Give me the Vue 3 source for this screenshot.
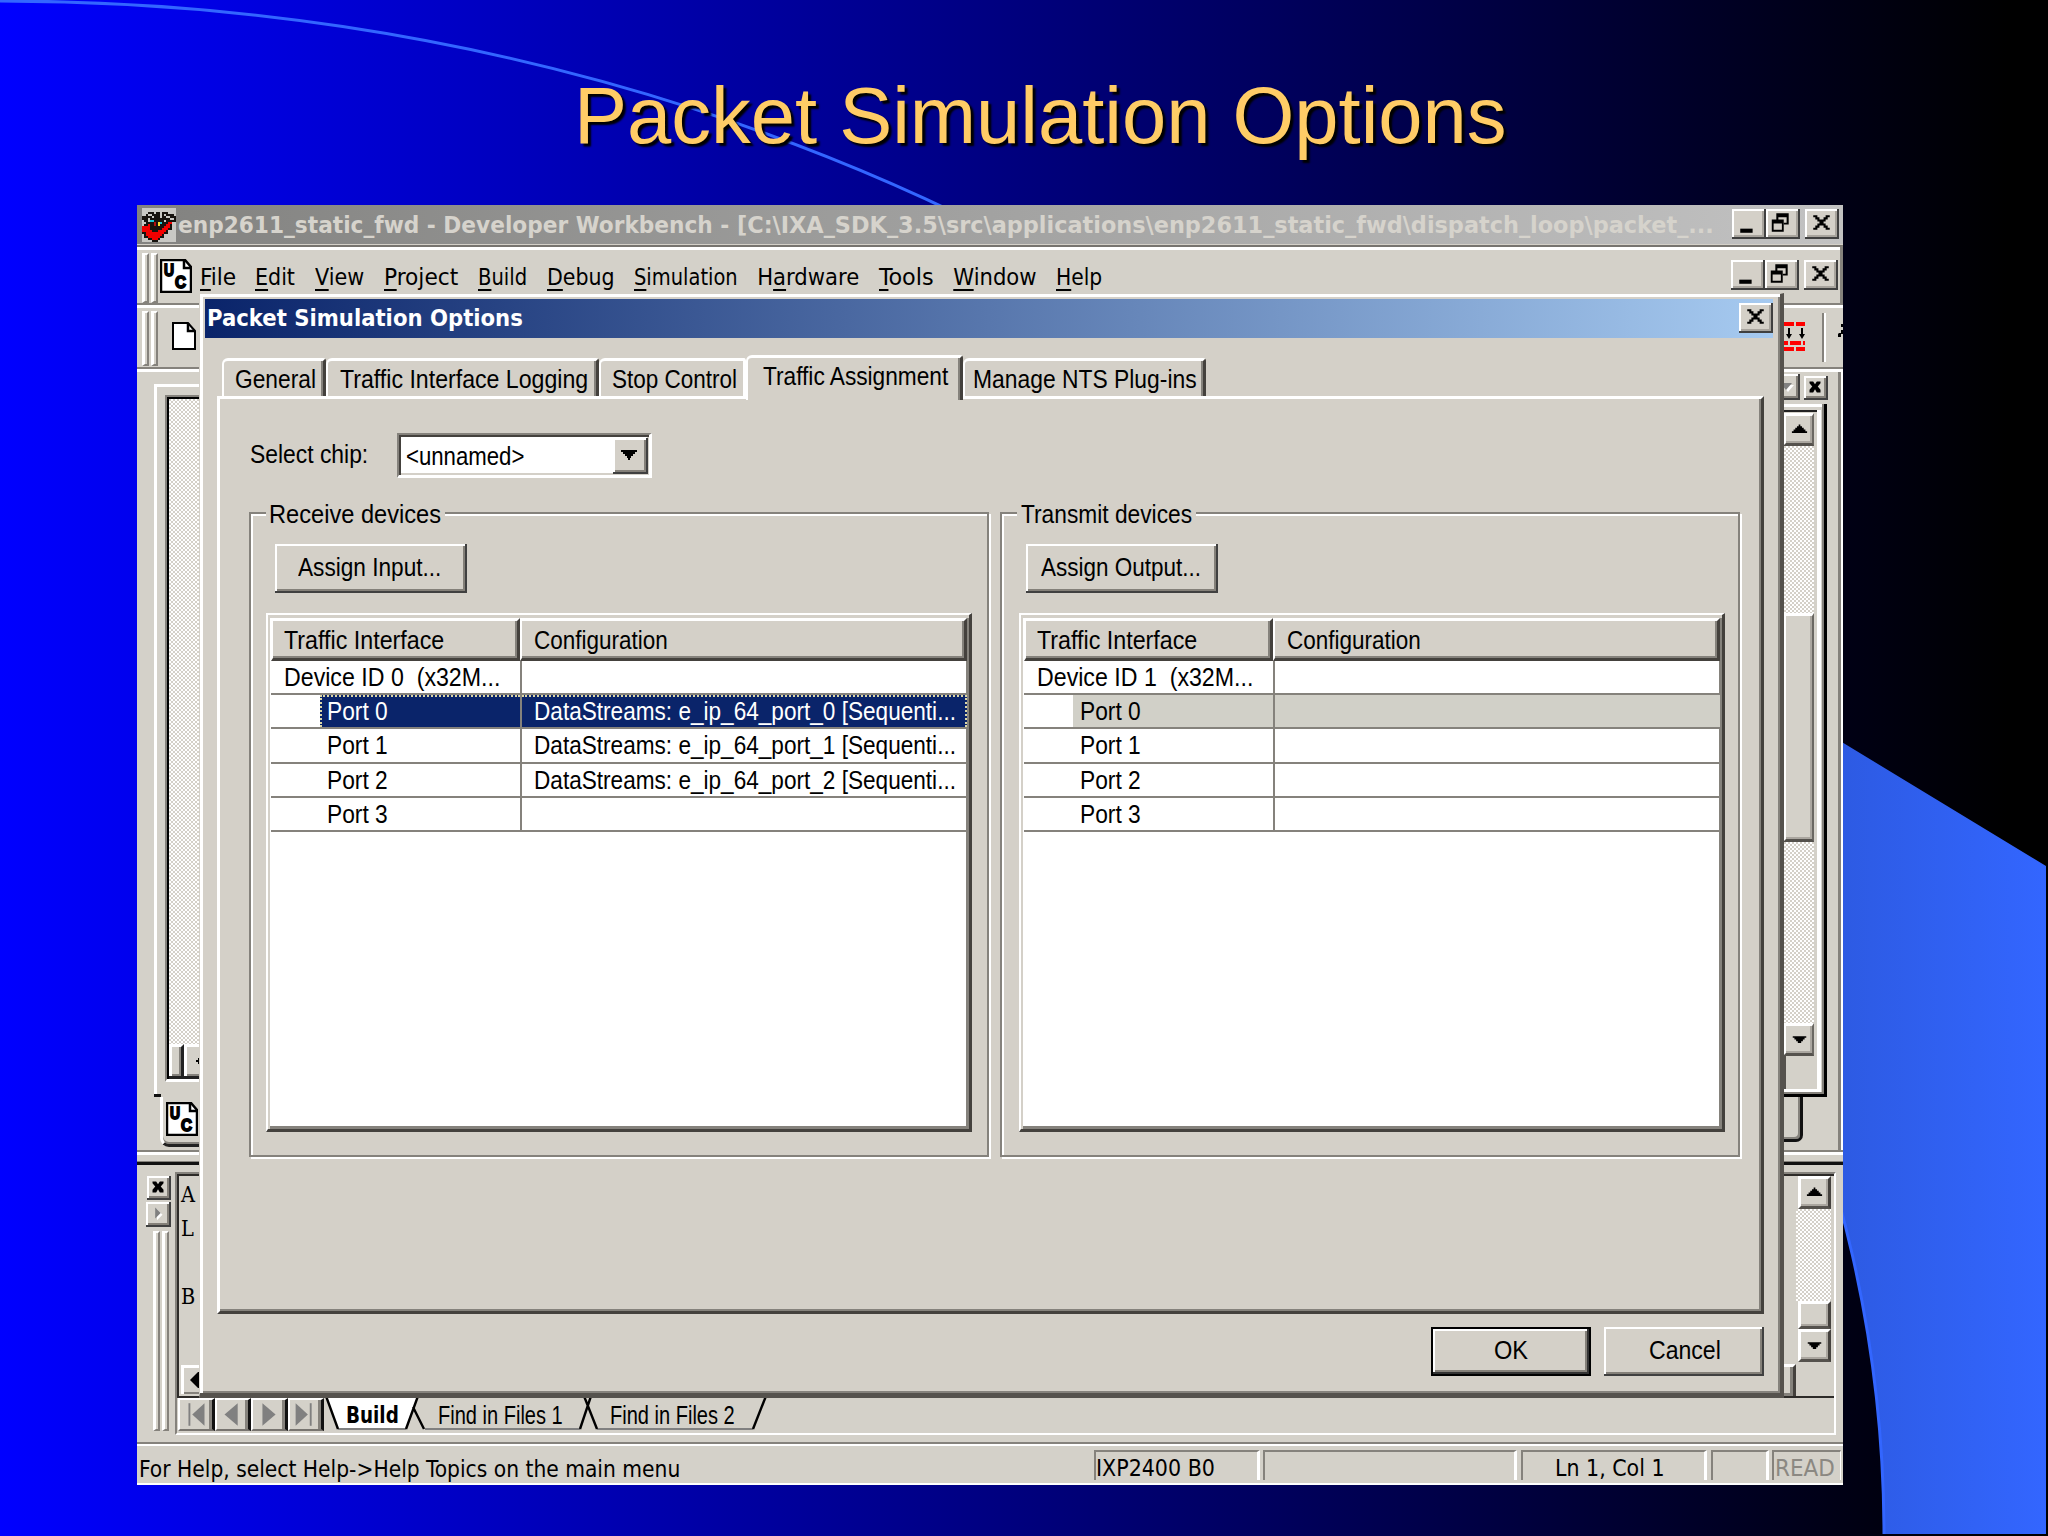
<script setup>
// Condenses a run of text horizontally so that it occupies the given width.
const vFit = {
  mounted(el, { value }) {
    const natural = el.offsetWidth
    el.style.transform = `scaleX(${value / natural})`
    el.style.marginRight = `${value - natural}px`
  }
}

const closeGlyph = 'M4 3h2v1h1v1h2v-1h1v-1h2v1h-1v1h-1v1h-1v1h1v1h1v1h1v1h-2v-1h-1v-1h-2v1h-1v1h-2v-1h1v-1h1v-1h1v-1h-1v-1h-1v-1h-1z'
const restoreGlyph = 'M5 2h6v5.500H8.500V6.600H10V4H6v1H5zM2.800 5h5.800v6H2.800zM3.700 7v3h4V7z'

const menus = [
  { a: '', k: 'F', b: 'ile', w: 36 },
  { a: '', k: 'E', b: 'dit', w: 40 },
  { a: '', k: 'V', b: 'iew', w: 49 },
  { a: '', k: 'P', b: 'roject', w: 74 },
  { a: '', k: 'B', b: 'uild', w: 49 },
  { a: '', k: 'D', b: 'ebug', w: 68 },
  { a: '', k: 'S', b: 'imulation', w: 104 },
  { a: 'H', k: 'a', b: 'rdware', w: 102 },
  { a: '', k: 'T', b: 'ools', w: 55 },
  { a: '', k: 'W', b: 'indow', w: 83 },
  { a: '', k: 'H', b: 'elp', w: 46 }
]

const tabs = [
  { t: 'General', w: 104, tw: 81, pad: 11 },
  { t: 'Traffic Interface Logging', w: 273, tw: 248, pad: 12 },
  { t: 'Stop Control', w: 147, tw: 125, pad: 11 },
  { t: 'Traffic Assignment', w: 217, tw: 185, pad: 15, on: true },
  { t: 'Manage NTS Plug-ins', w: 243, tw: 224, pad: 8 }
]

const groups = [
  {
    name: 'Receive devices', lw: 172, btn: 'Assign Input...', bw: 143, dev: 'Device ID 0  (x32M...', focus: true, lead: 15,
    ports: ['DataStreams: e_ip_64_port_0 [Sequenti...', 'DataStreams: e_ip_64_port_1 [Sequenti...', 'DataStreams: e_ip_64_port_2 [Sequenti...', '']
  },
  {
    name: 'Transmit devices', lw: 171, btn: 'Assign Output...', bw: 160, dev: 'Device ID 1  (x32M...', focus: false, lead: 17,
    ports: ['', '', '', '']
  }
]

const nav = [
  { bar: 9, tri: '26,3 26,27 13,15' },
  { bar: null, tri: '22,3 22,27 8,15' },
  { bar: null, tri: '10,3 10,27 24,15' },
  { bar: 21, tri: '6,3 6,27 19,15' }
]
</script>

<template>
  <div class="slide">
    <svg class="backdrop" width="2048" height="1536" viewBox="0 0 2048 1536">
      <defs>
        <linearGradient id="swoosh" x1="1500" x2="2046" y1="0" y2="0" gradientUnits="userSpaceOnUse">
          <stop offset="0" stop-color="#2347b4" />
          <stop offset="1" stop-color="#3366ff" />
        </linearGradient>
      </defs>
      <path d="M1700 656 L2046 866 V1534 H1884 A1884 1534 0 0 0 1700 873 Z" fill="url(#swoosh)" />
      <path d="M0 1 A1884 1534 0 0 1 1884 1534" fill="none" stroke="#3366ff" stroke-width="3" />
    </svg>
    <h1><span v-fit="933">Packet Simulation Options</span></h1>

    <div class="app">
      <header class="caption">
        <svg class="logo" width="35" height="34" viewBox="0 0 17 17" shape-rendering="crispEdges">
          <rect width="17" height="17" fill="#c8c8c4" />
          <path d="M1 3h2V2h3v1h1V2h2v1h1V2h3v1h3v1h1v3h-1v2h-1v2h-2v2h-2v2H9v1H8v1H5v-1H3v-1H1v-2H0V9h1V6H0V4h1z" fill="#16130f" />
          <path d="M0 9h3V8h1v3h1v1h3v-1h2v-1h1V9h1V8h1V7h2v1h-1v2h-1v1h-1v1h-1v1h-1v1H9v1H8v1H5v-1H3v-1H2v-2H0z" fill="#f20000" />
          <path d="M1 3h1v1H1zM3 3h2v1H3zM3 5h1v2H3zM5 4h1v1H5zM9 3h1v2H9zM11 3h1v1h-1zM12 4h2v1h-2zM14 5h2v1h-2zM11 6h1v1h-1zM1 7h1v1H1zM15 7h2v2h-2z" fill="#c8c8c4" />
          <path d="M4 6h2v1H4zM9 7h1v1H9z" fill="#18c8d8" /><path d="M8 7h1v2H8z" fill="#f4dc30" /><path d="M6 7h1v2H6z" fill="#b01010" />
        </svg>
        <span class="caption-text ui" v-fit="559">enp2611_static_fwd - Developer Workbench - </span>
        <span class="caption-text ui" v-fit="977">[C:\IXA_SDK_3.5\src\applications\enp2611_static_fwd\dispatch_loop\packet_...</span>
        <div class="winbtns">
          <i class="wb"><svg viewBox="0 0 16 14"><path d="M4 9.500h6v2H4z" /></svg></i>
          <i class="wb"><svg viewBox="0 0 16 14"><path :d="restoreGlyph" fill-rule="evenodd" /></svg></i>
          <i class="wb last"><svg viewBox="0 0 16 14"><path :d="closeGlyph" /></svg></i>
        </div>
      </header>

      <nav class="menubar">
        <i class="grip"></i><i class="grip"></i>
        <svg class="uc" width="32" height="34" viewBox="0 0 32 34">
          <path d="M1 1h24l6 7v25H1z" fill="#fff" stroke="#000" stroke-width="2.500" /><path d="M24 1v8h7" fill="none" stroke="#000" stroke-width="2.500" />
          <text x="4" y="17" class="uctext" textLength="10" lengthAdjust="spacingAndGlyphs">U</text><text x="15" y="29" class="uctext" textLength="11" lengthAdjust="spacingAndGlyphs">C</text>
        </svg>
        <div class="menus">
          <span v-for="m in menus" :key="m.k + m.b" class="ui" v-fit="m.w">{{ m.a }}<u>{{ m.k }}</u>{{ m.b }}</span>
        </div>
        <div class="winbtns mdi">
          <i class="wb"><svg viewBox="0 0 16 14"><path d="M4 9.500h6v2H4z" /></svg></i>
          <i class="wb"><svg viewBox="0 0 16 14"><path :d="restoreGlyph" fill-rule="evenodd" /></svg></i>
          <i class="wb last"><svg viewBox="0 0 16 14"><path :d="closeGlyph" /></svg></i>
        </div>
      </nav>

      <div class="toolbar">
        <i class="grip"></i><i class="grip"></i>
        <svg class="new" width="24" height="28" viewBox="0 0 24 28"><path d="M1 1h15l7 8v18H1z" fill="#fff" stroke="#000" stroke-width="2" /><path d="M16 1v8h7" fill="none" stroke="#000" stroke-width="2.500" /></svg>
        <svg class="bricks" width="22" height="32" viewBox="0 0 22 32">
          <path d="M0 1h11v4H0zM13 1h9v4h-9zM0 20h5v4H0zM7 20h11v4H7zM20 20h2v4h-2zM0 26h11v4H0zM13 26h9v4h-9z" fill="#f00" />
          <path d="M5 7h2v6h2l-3 5-3-5h2zM18 7h2v6h2l-3 5-3-5h2z" />
        </svg>
        <i class="sep"></i>
        <svg class="frag" width="5" height="16" viewBox="0 0 5 16"><path d="M3 0h2v3H3zM1 9h2V6h2v4H3v3H0v-3z" /></svg>
      </div>

      <section class="workspace">
        <div class="left">
          <div class="childframe">
            <div class="well">
              <div class="checker"></div>
              <div class="wellfoot">
                <i class="split"></i>
                <i class="hbtn"><svg width="14" height="14" viewBox="0 0 14 14"><path d="M3 7h2V5h3v6H5V9H3z" /></svg></i>
              </div>
            </div>
          </div>
          <i class="dash"></i>
          <div class="doctab">
            <svg width="32" height="34" viewBox="0 0 32 34">
              <path d="M1 1h24l6 7v25H1z" fill="#fff" stroke="#000" stroke-width="2.500" /><path d="M24 1v8h7" fill="none" stroke="#000" stroke-width="2.500" />
              <text x="4" y="17" class="uctext" textLength="10" lengthAdjust="spacingAndGlyphs">U</text><text x="15" y="29" class="uctext" textLength="11" lengthAdjust="spacingAndGlyphs">C</text>
            </svg>
          </div>
        </div>
        <div class="right">
          <div class="minis">
            <i class="mini drop"><svg width="14" height="10" viewBox="0 0 14 10"><path d="M2 2h12l-6 7z" fill="#fff" /><path d="M0 0h12L6 7z" fill="#808080" /></svg></i>
            <i class="mini"><svg viewBox="0 0 12 12"><path d="M3 3h2l1 1.500L7 3h2v1L7.500 5.700 9 7.500V9H7L6 7.200 5 9H3V7.500l1.500-1.800L3 4z" /></svg></i>
          </div>
          <div class="rframe">
            <div class="vscroll">
              <i class="sbtn"><svg viewBox="0 0 16 16"><path d="M7.500 5h1v1h1v1h1v1h1v1h1v1h-9V9h1V8h1V7h1V6h1z" /></svg></i>
              <div class="checker up"></div>
              <i class="thumb"></i>
              <div class="checker"></div>
              <i class="sbtn"><svg viewBox="0 0 16 16"><path d="M4 6h8v1h-1v1h-1v1H9v1H7V9H6V8H5V7H4z" /></svg></i>
              <div class="corner"></div>
            </div>
          </div>
          <div class="rtab"></div>
        </div>
      </section>
      <div class="divider"></div>

      <section class="output">
        <aside>
          <i class="mini"><svg viewBox="0 0 12 12"><path d="M3 3h2l1 1.500L7 3h2v1L7.500 5.700 9 7.500V9H7L6 7.200 5 9H3V7.500l1.500-1.800L3 4z" /></svg></i>
          <i class="mini wide"><svg viewBox="0 0 12 12"><path d="M6 4v6l3-3z" fill="#fff" /><path d="M5 3v6l3-3z" fill="#808080" /></svg></i>
          <div class="vgrips"><i class="grip"></i><i class="grip"></i></div>
        </aside>
        <div class="outframe">
          <div class="outbody">
            <div class="log"><p>A</p><p>L</p><p>&nbsp;</p><p>B</p><i class="hbtn low"><svg width="10" height="16" viewBox="0 0 10 16"><path d="M0 8l8-8h2v16H8z" /></svg></i></div>
            <div class="hend"><i class="hpiece"></i></div>
            <div class="vscroll out">
              <i class="sbtn"><svg viewBox="0 0 16 16"><path d="M7.500 5h1v1h1v1h1v1h1v1h1v1h-9V9h1V8h1V7h1V6h1z" /></svg></i>
              <div class="checker"></div>
              <i class="thumb small"></i>
              <i class="sbtn"><svg viewBox="0 0 16 16"><path d="M4 6h8v1h-1v1h-1v1H9v1H7V9H6V8H5V7H4z" /></svg></i>
              <div class="blank"></div>
            </div>
          </div>
          <div class="outtabs">
            <i v-for="(n, i) in nav" :key="i" class="nav"><svg width="34" height="30" viewBox="0 0 34 30"><rect v-if="n.bar !== null" :x="n.bar" y="3" width="2" height="24" fill="#808080" /><polygon :points="n.tri" fill="#808080" /></svg></i>
            <div class="sheets">
              <svg class="sheetlines" width="450" height="35" viewBox="0 0 450 35">
                <path d="M2 0L14 33H82L94 0z" fill="#fff" /><path d="M14 33H82M101 33H256M273 33H429" stroke="#808080" stroke-width="2" />
                <path d="M2 0L14 33M82 33L94 0M89 11L100 33M256 33L267 0M260 0L273 33M429 33L442 0" fill="none" stroke="#000" stroke-width="2.400" />
              </svg>
              <b class="ui" v-fit="53">Build</b><span class="narrow s1" v-fit="125">Find in Files 1</span><span class="narrow s2" v-fit="125">Find in Files 2</span>
            </div>
          </div>
        </div>
      </section>

      <footer class="status">
        <div class="help"><span class="ui" v-fit="541">For Help, select Help-&gt;Help Topics on the main menu</span></div>
        <div class="pane p1"><span class="ui" v-fit="119">IXP2400 B0</span></div>
        <div class="pane p2"></div>
        <div class="pane p3"><span class="ui" v-fit="110">Ln 1, Col 1</span></div>
        <div class="pane p4"></div>
        <div class="pane p5"><span class="ui" v-fit="60">READ</span></div>
      </footer>

      <div class="dialog">
        <div class="dlgtitle">
          <b class="ui" v-fit="316">Packet Simulation Options</b>
          <i class="wb"><svg viewBox="0 0 16 14"><path :d="closeGlyph" /></svg></i>
        </div>
        <div class="tabs">
          <div v-for="t in tabs" :key="t.t" class="tab" :class="{ on: t.on }" :style="{ width: t.w + 'px', paddingLeft: t.pad + 'px' }"><span v-fit="t.tw">{{ t.t }}</span></div>
        </div>
        <div class="sheet">
          <div class="chip">
            <label><span v-fit="118">Select chip:</span></label>
            <div class="combo"><span v-fit="118">&lt;unnamed&gt;</span><i class="dd"><svg width="16" height="10" viewBox="0 0 16 10"><path d="M0 0h16v2h-2v2h-2v2h-2v2H9v2H7V8H6V6H4V4H2V2H0z" /></svg></i></div>
          </div>
          <div class="groups">
            <div v-for="g in groups" :key="g.name" class="group" :style="{ paddingLeft: g.lead + 'px' }">
              <div class="legend"><span v-fit="g.lw">{{ g.name }}</span></div>
              <div class="btn assign"><span v-fit="g.bw">{{ g.btn }}</span></div>
              <div class="list">
                <div class="head">
                  <div class="hc c1"><span v-fit="160">Traffic Interface</span></div>
                  <div class="hc c2"><span v-fit="134">Configuration</span></div>
                </div>
                <div class="row"><div class="c1"><span v-fit="216">{{ g.dev }}</span></div><div class="c2"></div></div>
                <div v-for="(p, i) in g.ports" :key="i" class="row port" :class="{ sel: i === 0 && g.focus, dim: i === 0 && !g.focus }">
                  <div class="c1"><div class="cell"><span v-fit="61">Port {{ i }}</span></div></div>
                  <div class="c2"><span v-if="p" v-fit="422">{{ p }}</span></div>
                </div>
              </div>
            </div>
          </div>
        </div>
        <div class="actions">
          <div class="btn ok"><span v-fit="34">OK</span></div>
          <div class="btn cancel"><span v-fit="72">Cancel</span></div>
        </div>
      </div>
    </div>
  </div>
</template>

<style>
body { margin: 0; background: #000; }
</style>

<style scoped>
* { box-sizing: border-box; }
i { display: block; font-style: normal; flex: none; }
svg { display: block; flex: none; }
span, b { display: inline-block; flex: none; white-space: pre; transform-origin: 0 50%; }
.slide { position: relative; width: 2048px; height: 1536px; overflow: hidden; background: linear-gradient(90deg, #00f, #000 98%); font: 25px/30px "Liberation Sans", sans-serif; color: #000; }
.backdrop { position: absolute; inset: 0; }
h1 { position: relative; margin: 0; height: 205px; padding: 70px 0 0 574px; font-size: 79px; line-height: 92px; font-weight: 400; color: #fc6; text-shadow: 3px 3px 2px #000; }
.ui { font-family: "DejaVu Sans Condensed", "DejaVu Sans", sans-serif; font-size: 23.5px; }
.app { position: relative; margin-left: 137px; width: 1706px; height: 1280px; background: #d4d1c9; display: flex; flex-direction: column; border-bottom: 2px solid #fff; }

.caption { height: 40px; flex: none; display: flex; align-items: center; padding-left: 4px; background: linear-gradient(90deg, #828280, #c2c2c2); border-bottom: 1px solid #d4d0c8; }
.logo { margin-right: 2px; }
.caption-text { color: #d6d3cc; font-weight: 700; }
.winbtns { display: flex; margin: 0 4px 0 auto; align-self: flex-start; padding-top: 4px; }
.wb { width: 34px; height: 30px; background: #d4d0c8; padding: 0 1px 1px 0; box-shadow: inset -2px -2px #404040, inset 2px 2px #fff, inset -4px -4px #a8a49d; }
.wb svg { width: 33px; height: 29px; }
.wb.last { margin-left: 5px; }

.menubar { height: 60px; flex: none; display: flex; align-items: flex-start; border-top: 2px solid #77746f; border-bottom: 2px solid #85827c; border-right: 3px solid #85827c; box-shadow: inset 0 3px #fff; padding: 6px 0 0 5px; }
.grip { width: 7px; height: 50px; margin-right: 2px; border: solid #fff; border-width: 2px 2px 2px 3px; border-right-color: #85827c; border-bottom-color: #85827c; }
.uc { margin-top: 6px; }
.uctext { font: 700 17px "Liberation Sans", sans-serif; stroke: #000; stroke-width: 1.8; }
.menus { display: flex; gap: 19.7px; margin: 9px 0 0 7.500px; }
u { text-decoration: underline; text-underline-offset: 4px; text-decoration-thickness: 2px; text-decoration-skip-ink: none; }
.mdi { margin-right: 2px; padding-top: 7px; }

.toolbar { height: 64px; flex: none; display: flex; border-top: 3px solid #fff; border-bottom: 2px solid #85827c; padding: 3px 0 0 5px; }
.toolbar .grip { height: 55px; }
.new { margin: 11px 0 0 12px; }
.bricks { margin: 10px 17px 0 auto; }
.sep { width: 4px; height: 49px; margin-top: 2px; border-left: 2px solid #85827c; border-right: 2px solid #fff; }
.frag { margin: 13px 0 0 12px; }

.workspace { height: 781px; flex: none; display: flex; justify-content: space-between; border-top: 3px solid #fff; border-right: 2px solid #fff; box-shadow: inset -3px 0 #85827c; }
.left { width: 70px; padding: 12px 0 0 17px; }
.childframe { height: 710px; border: solid #fff; border-width: 3px 0 0 3px; padding: 8px 0 0 8px; }
.well { height: 687px; display: flex; flex-direction: column; border: solid #85827c; border-width: 2px 0 0 2px; box-shadow: inset 2px 2px #000; padding: 2px 0 0 2px; border-bottom: 3px solid #fff; }
.checker { flex: 1; background: repeating-conic-gradient(#fff 0 25%, #d4d0c8 0 50%) 0 0 / 4px 4px; }
.wellfoot { height: 35px; display: flex; border-bottom: 3px solid #222; }
.split { width: 15px; border: solid #fff; border-width: 3px 3px 0 3px; border-right-color: #222; box-shadow: inset -2px -2px #85827c; }
.hbtn { flex: 1; border: solid #fff; border-width: 3px 0 0 3px; box-shadow: inset 0 -2px #85827c; padding: 6px 0 0 6px; }
.dash { width: 7px; height: 3px; background: #111; }
.doctab { margin-left: 6px; height: 50px; border-left: 3px solid #fff; border-bottom: 3px solid #222; border-radius: 0 0 0 9px; padding: 5px 0 0 3px; box-shadow: inset 0 -2px #85827c; }

.right { width: 70px; padding: 2px 14px 0 0; display: flex; flex-direction: column; align-items: flex-end; }
.minis { display: flex; gap: 4px; height: 30px; align-items: flex-start; margin-right: -1px; }
.mini { width: 24px; height: 24px; margin-top: 2px; box-shadow: inset -2px -2px #404040, inset 2px 2px #fff, inset -4px -4px #848079; }
.mini svg { width: 22px; height: 22px; }
.mini.drop { width: 30px; height: 26px; margin-top: 0; padding: 9px 0 0 10px; }
.mini.drop svg { width: 14px; height: 10px; }
.rframe { width: 56px; height: 693px; border: solid #000; border-width: 0 3px 3px 0; box-shadow: inset -2px -2px #85827c, inset 0 3px #fff; padding: 6px 3px 5px 0; }
.rframe .vscroll { height: 682px; border: solid #fff; border-width: 0 4px 3px 0; box-shadow: inset 0 2px #222; padding: 3px 3px 0 0; }
.vscroll { display: flex; flex-direction: column; align-items: flex-end; }
.vscroll .checker { width: 34px; }
.checker.up { flex: none; height: 167px; }
.sbtn { width: 31px; height: 33px; border: solid #fff; border-width: 3px 2px 3px 3px; border-right-color: #6a6762; border-bottom-color: #55524d; box-shadow: inset -2px -2px #aaa69f; }
.sbtn svg { width: 27px; height: 27px; }
.thumb { width: 31px; height: 229px; border: solid #fff; border-width: 3px 2px 3px 3px; border-right-color: #6a6762; border-bottom-color: #55524d; box-shadow: inset -2px -2px #aaa69f; }
.corner { width: 31px; height: 33px; border-left: 3px solid #55524d; }
.rtab { width: 40px; height: 45px; margin-right: 24px; border: solid #111; border-width: 0 3px 3px 0; border-radius: 0 0 7px 0; box-shadow: inset -2px -2px #85827c; }

.divider { flex: none; height: 15px; border-top: 2px solid #85827c; border-bottom: 3px solid #111; box-shadow: inset 0 3px #fff, inset 0 -1px #85827c; }

.output { height: 277px; flex: none; display: flex; padding: 7px 7px 7px 0; }
aside { width: 38px; display: flex; flex-direction: column; align-items: flex-end; padding: 2px 4px 0 0; }
.mini.wide { width: 25px; height: 25px; }
.vgrips { display: flex; margin-top: 4px; }
.vgrips .grip { height: 200px; margin: 0 2px 0 0; }
.outframe { flex: 1; border: solid #85827c; border-width: 2px; border-right-color: #fff; border-bottom-color: #fff; }
.outbody { height: 224px; display: flex; border: solid #2d2b28; border-width: 2px 0 2px 2px; padding-right: 3px; }
.log { width: 40px; padding: 1px 0 0 2px; font: 22.5px/34px "DejaVu Serif", serif; }
p { margin: 0; transform: scaleX(.86); transform-origin: 0 0; height: 34px; }
.hbtn.low { width: 26px; height: 29px; margin: 52px 0 0 0; padding: 4px 0 0 6px; }
.hend { flex: 1; display: flex; justify-content: flex-end; align-items: flex-end; }
.hpiece { width: 24px; height: 32px; border: solid #fff; border-width: 3px 3px 0 0; border-right-color: #44413d; box-shadow: inset -3px -3px #85827c; }
.out { width: 35px; }
.out .checker { width: 35px; }
.out .sbtn, .thumb.small { width: 33px; border-right-width: 3px; border-right-color: #44413d; }
.thumb.small { height: 28px; }
.blank { height: 34px; }
.outtabs { display: flex; height: 36px; padding-left: 1px; }
.nav { width: 36.500px; height: 33px; border: solid #fff; border-width: 2px 3px 2px 2px; border-right-color: #111; border-bottom-color: #77746f; box-shadow: inset -3px 0 #85827c; }
.nav svg { width: 32px; height: 29px; }
.sheets { position: relative; display: flex; padding: 2px 0 0 22px; }
.sheets b { font-weight: 700; }
.narrow { font-size: 25px; }
.s1 { margin-left: 39px; }
.s2 { margin-left: 48px; }
.sheetlines { position: absolute; left: 0; top: -2px; }
.sheets b, .sheets span { z-index: 1; }

.status { flex: 1; display: flex; border-top: 2px solid #85827c; box-shadow: inset 0 2px #fff; padding: 6px 1px 0 0; }
.help { width: 957px; padding: 3px 0 0 2px; }
.pane { height: 30px; border: 2px solid #85827c; border-right: 3px solid #fff; border-bottom: 0; white-space: nowrap; line-height: 31px; }
.p1 { width: 166px; margin-right: 3px; }
.p2 { width: 254px; margin-right: 4px; }
.p3 { width: 186px; margin-right: 4px; padding-left: 32px; }
.p4 { width: 58px; margin-right: 3px; }
.p5 { width: 69px; padding-left: 1px; color: #8b8882; border-right-width: 1px; }

.dialog { position: absolute; left: 62px; top: 88px; width: 1585px; height: 1105px; background: #d4d0c8; border: solid #d4d0c8; border-width: 1px 4px 5px 1px; border-right-color: #55524d; border-bottom-color: #55524d; box-shadow: inset 3px 3px #fff, inset -2px -2px #85827c; padding: 5px 0 0 5px; }
.dlgtitle { width: 1568px; height: 39px; display: flex; justify-content: space-between; background: linear-gradient(90deg, #0a246a, #a6caf0); padding: 4px 0 0 2px; color: #fff; }
.tabs { display: flex; align-items: flex-end; height: 58px; padding-left: 17px; }
.tab { height: 38px; flex: none; border: solid #fff; border-width: 3px 3px 0 2px; border-right-color: #44413d; border-radius: 6px 3px 0 0; box-shadow: inset -2px 0 #85827c; line-height: 32px; padding-top: 2px; white-space: nowrap; }
.tab:nth-child(3) { border-right-color: #fff; box-shadow: none; }
.tab.on { height: 45px; margin-bottom: -4px; background: #d4d0c8; z-index: 1; }
.sheet { margin-left: 12px; width: 1547px; height: 918px; border: solid #fff; border-width: 3px; border-right-color: #44413d; border-bottom-color: #44413d; box-shadow: inset -2px -2px #85827c; padding: 34px 0 0 29px; }
.chip { display: flex; height: 45px; }
label { width: 148px; padding: 6px 0 0 1px; }
.combo { width: 255px; height: 45px; display: flex; justify-content: space-between; background: #fff; border: 2px solid #85827c; border-right: 3px solid #fff; border-bottom: 3px solid #fff; box-shadow: inset 2px 2px #44413d, inset -2px -2px #d4d0c8; padding: 3px 1px 2px 7px; line-height: 37px; }
.dd { width: 35px; height: 36px; background: #d4d0c8; box-shadow: inset -2px -2px #404040, inset 2px 2px #fff, inset -4px -4px #848079; padding: 12px 0 0 8px; }
.groups { display: flex; gap: 11px; margin-top: 34px; }
.group { width: 740px; height: 645px; border: 2px solid #85827c; box-shadow: inset 2px 2px #fff, 2px 2px #fff; }
.legend { margin: -10px 0 0 -2px; padding-left: 4px; width: 179px; background: #d4d0c8; height: 25px; line-height: 20px; }
.group:nth-child(1) .legend { margin-left: 0; padding-left: 3px; }
.btn { width: 160px; height: 49px; line-height: 46px; display: flex; justify-content: center; box-shadow: inset -2px -2px #404040, inset 2px 2px #fff, inset -4px -4px #848079; }
.assign { width: 192px; margin: 15px 0 20px 7px; padding-right: 2px; }
.group:nth-child(1) .assign { margin-left: 9px; }
.cancel { padding-left: 1px; }
.list { width: 706px; height: 519px; background: #fff; border: solid #fff; border-width: 2px 3px 3px 2px; border-right-color: #44413d; border-bottom-color: #44413d; box-shadow: inset 2px 3px #d4d0c8, inset -3px -3px #85827c; padding: 3px 3px 0 3px; }
.head, .row { display: flex; width: 696px; }
.c1 { width: 251px; flex: none; }
.c2 { flex: 1; }
.head { height: 43px; }
.head .c1 { width: 249px; }
.hc { background: #d4d0c8; border: solid #fff; border-width: 3px; border-right-color: #44413d; border-bottom-color: #44413d; border-left-width: 2px; box-shadow: inset -2px -2px #85827c; line-height: 36px; padding: 1px 0 0 11px; }
.head .c2 { padding-left: 12px; }
.row { height: 34.200px; line-height: 33px; border-bottom: 2px solid #85827c; }
.row .c1 { padding-left: 13px; border-right: 2px solid #85827c; }
.row .c2 { padding-left: 12px; }
.row.port .c1 { padding-left: 49px; }
.cell { padding-left: 7px; height: 32px; }
.sel { color: #fff; }
.sel .cell, .sel .c2 { background: #0a246a; border-top: 2px dotted #ddd8a8; line-height: 29px; height: 32px; }
.sel .cell { border-left: 2px dotted #ddd8a8; padding-left: 5px; }
.sel .c2 { border-right: 2px dotted #ddd8a8; }
.dim .cell, .dim .c2 { background: #d1d0c8; }
.actions { display: flex; justify-content: flex-end; gap: 13px; padding: 13px 16px 0 0; }
.ok { box-shadow: inset 0 0 0 2px #000, inset -4px -4px #333, inset 4px 4px #fff, inset -6px -6px #848079; }
</style>
